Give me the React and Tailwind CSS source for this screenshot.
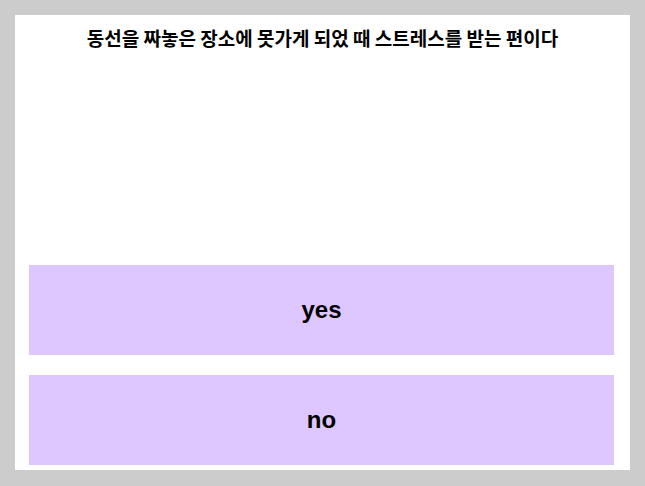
export default function App() {
  return (
    <div className="h-screen w-full bg-[#cccccc] p-[15px]">
      <div className="flex h-[455px] w-[615px] flex-col bg-white">
        <h1
          className="pt-[10px] text-center text-[19px] leading-[26px] font-bold text-black"
          style={{ fontFamily: '"Noto Sans CJK KR", "Liberation Sans", sans-serif' }}
        >
          동선을 짜놓은 장소에 못가게 되었 때 스트레스를 받는 편이다
        </h1>
        <div className="mt-auto flex flex-col gap-5 pl-[14px] pr-[16px] pb-[5px]">
          <button
            className="h-[90px] w-full bg-[#dec6fe] text-[24px] font-bold text-black"
            style={{ fontFamily: '"Liberation Sans", Arial, sans-serif' }}
          >
            yes
          </button>
          <button
            className="h-[90px] w-full bg-[#dec6fe] text-[24px] font-bold text-black"
            style={{ fontFamily: '"Liberation Sans", Arial, sans-serif' }}
          >
            no
          </button>
        </div>
      </div>
    </div>
  );
}
